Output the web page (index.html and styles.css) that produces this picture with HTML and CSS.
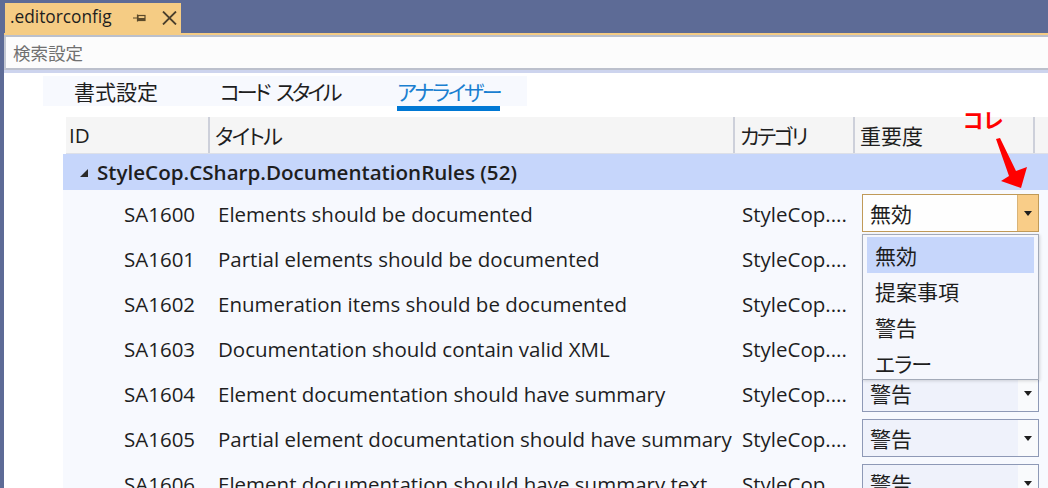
FILE: index.html
```html
<!DOCTYPE html>
<html lang="ja">
<head>
<meta charset="utf-8">
<link rel="stylesheet" href="styles.css">
</head>
<body>
<div class="titlebar">
  <div class="doctab">
    <span class="doctab-name">.editorconfig</span>
    <svg class="pin" width="13" height="8" viewBox="0 0 13 8"><path d="M0 4h4M4.5 0.5v7" stroke="#5b4a2a" stroke-width="1.2" fill="none"/><rect x="5" y="1.5" width="7" height="5" fill="none" stroke="#5b4a2a" stroke-width="1.2"/><rect x="5" y="4" width="7" height="2.5" fill="#5b4a2a"/></svg>
    <svg class="close" width="15" height="14" viewBox="0 0 15 14"><path d="M1 0.5l13 13M14 0.5l-13 13" stroke="#4a3f2c" stroke-width="1.8" fill="none"/></svg>
  </div>
</div>
<div class="main">
  <div class="accent"></div>
  <div class="search"><span class="search-ph">検索設定</span></div>
  <div class="content">
    <div class="tabs">
      <div class="tab t1">書式設定</div>
      <div class="tab t2 kana">コード スタイル</div>
      <div class="tab t3 kana active">アナライザー</div>
    </div>
    <div class="table">
      <div class="thead">
        <div class="th first">ID</div>
        <div class="th kana-s">タイトル</div>
        <div class="th kana">カテゴリ</div>
        <div class="th">重要度</div>
        <div class="th"></div>
      </div>
      <div class="group"><span class="tri"></span>StyleCop.CSharp.DocumentationRules (52)</div>
      <div class="row">
        <div class="c-id">SA1600</div><div class="c-title">Elements should be documented</div><div class="c-cat">StyleCop....</div>
        <div class="c-sev"><div class="select open"><span class="sel-val">無効</span><span class="sel-btn"><i class="arrow"></i></span></div></div>
      </div>
      <div class="row">
        <div class="c-id">SA1601</div><div class="c-title">Partial elements should be documented</div><div class="c-cat">StyleCop....</div>
        <div class="c-sev"></div>
      </div>
      <div class="row">
        <div class="c-id">SA1602</div><div class="c-title">Enumeration items should be documented</div><div class="c-cat">StyleCop....</div>
        <div class="c-sev"></div>
      </div>
      <div class="row">
        <div class="c-id">SA1603</div><div class="c-title">Documentation should contain valid XML</div><div class="c-cat">StyleCop....</div>
        <div class="c-sev"></div>
      </div>
      <div class="row">
        <div class="c-id">SA1604</div><div class="c-title">Element documentation should have summary</div><div class="c-cat">StyleCop....</div>
        <div class="c-sev"><div class="select"><span class="sel-val">警告</span><span class="sel-btn"><i class="arrow"></i></span></div></div>
      </div>
      <div class="row">
        <div class="c-id">SA1605</div><div class="c-title">Partial element documentation should have summary</div><div class="c-cat">StyleCop....</div>
        <div class="c-sev"><div class="select"><span class="sel-val">警告</span><span class="sel-btn"><i class="arrow"></i></span></div></div>
      </div>
      <div class="row">
        <div class="c-id">SA1606</div><div class="c-title">Element documentation should have summary text</div><div class="c-cat">StyleCop....</div>
        <div class="c-sev"><div class="select"><span class="sel-val">警告</span><span class="sel-btn"><i class="arrow"></i></span></div></div>
      </div>
    </div>
  </div>
</div>

<div class="popup">
  <div class="opt sel">無効</div>
  <div class="opt">提案事項</div>
  <div class="opt">警告</div>
  <div class="opt kana-l">エラー</div>
</div>

<div class="note">コレ</div>
<svg class="note-arrow" width="1048" height="488" viewBox="0 0 1048 488"><polygon points="996,139 1000,138 1016,171 1027,167 1021,188 1001,181 1009,176" fill="#ff0000"/></svg>
</body>
</html>
```
FILE: styles.css
```css
html, body {
  margin: 0;
  padding: 0;
}
body {
  width: 1048px;
  height: 488px;
  overflow: hidden;
  background: #ffffff;
  font-family: "Open Sans", "Noto Sans CJK JP", sans-serif;
  color: #1e1e1e;
  position: relative;
}
.titlebar {
  height: 33px;
  background: #5d6b96;
  display: flex;
  align-items: flex-end;
}
.doctab {
  margin-left: 5px;
  width: 176px;
  height: 30px;
  background: #f5cc84;
  display: flex;
  align-items: center;
  box-sizing: border-box;
  padding-left: 5px;
}
.doctab-name {
  font-size: 17.3px;
  color: #1e1e1e;
  width: 118px;
  line-height: 1;
  margin-top: -2px;
}
.pin {
  margin-left: 5px;
}
.close {
  margin-left: 16px;
}
.main {
  border-left: 4px solid #5d6b96;
  height: 455px;
}
.accent {
  height: 2px;
  background: #f5cc84;
  border-bottom: 2px solid #bbc0cc;
}
.search {
  height: 31px;
  background: #fcfcfc;
  border-left: 2px solid #c4c8d2;
  border-bottom: 2px solid #bcc0cc;
  box-shadow: 0 3px 0 #cdd4ee;
  display: flex;
  align-items: center;
  padding-left: 7px;
}
.search-ph {
  font-family: "Noto Sans CJK JP", sans-serif;
  font-size: 17.5px;
  color: #707070;
}
.content {
  padding-top: 6px;
}
.tabs {
  margin-left: 39px;
  width: 484px;
  height: 30px;
  background: #f7f9fe;
  display: flex;
  box-sizing: border-box;
  white-space: nowrap;
}
.tab {
  flex-shrink: 0;
  height: 30px;
  display: flex;
  align-items: center;
  font-family: "Noto Sans CJK JP", sans-serif;
  font-feature-settings: "palt";
  font-size: 21px;
  color: #1e1e1e;
}
.t1 {
  margin-left: 31px;
}
.t2 {
  margin-left: 62px;
  word-spacing: 6px;
}
.t2.kana {
  letter-spacing: -3px;
}
.t3 {
  margin-left: 58px;
}
.kana {
  letter-spacing: -2.3px;
}
.kana-s {
  letter-spacing: -1.6px;
}
.kana-l {
  letter-spacing: -1px;
}
.tab.active {
  color: #1a7fd0;
  box-shadow: 0 5px 0 #0078d4;
}
.table {
  margin-top: 11px;
  margin-left: 59px;
}
.thead {
  margin-left: 3px;
  height: 36px;
  background: #f5f5f5;
  border-bottom: 1px solid #dde0e8;
  display: grid;
  grid-template-columns: 142px 525px 120px 180px 1fr;
}
.th {
  border-left: 2px solid #cdd0da;
  display: flex;
  align-items: center;
  padding-left: 5px;
  font-family: "Noto Sans CJK JP", sans-serif;
  font-feature-settings: "palt";
  font-size: 21px;
  color: #1e1e1e;
}
.th.first {
  border-left: none;
  padding-left: 3px;
  font-family: "Open Sans", sans-serif;
  font-size: 20.6px;
}
.group {
  height: 36px;
  background: #c6d6fb;
  display: flex;
  align-items: center;
  font-size: 20.6px;
  font-weight: 600;
  color: #1e1e1e;
  padding-left: 17px;
}
.tri {
  width: 0;
  height: 0;
  border-left: 8px solid transparent;
  border-bottom: 8px solid #2a2a2a;
  margin-right: 9px;
  margin-top: 2px;
}
.row {
  height: 45px;
  background: #f7f9fe;
  display: grid;
  grid-template-columns: 148px 525px 120px 180px 1fr;
  align-items: center;
  font-size: 20.5px;
  color: #1e1e1e;
  white-space: nowrap;
}
.row > div {
  padding-top: 2px;
}
.c-id {
  padding-left: 61px;
}
.c-title {
  padding-left: 7px;
}
.c-cat {
  padding-left: 6px;
}
.row > .c-sev {
  padding-left: 6px;
  padding-top: 0;
}
.select {
  width: 177px;
  height: 38px;
  box-sizing: border-box;
  border: 1px solid #8e99b6;
  background: #eff2fb;
  display: flex;
  margin-top: 1px;
}
.sel-val {
  flex: 1;
  display: flex;
  align-items: center;
  padding-left: 7px;
  font-family: "Noto Sans CJK JP", sans-serif;
  font-size: 21px;
}
.sel-btn {
  width: 20px;
  display: flex;
  align-items: center;
  justify-content: center;
  background: #f9fafc;
}
.arrow {
  width: 0;
  height: 0;
  border-left: 4.5px solid transparent;
  border-right: 4.5px solid transparent;
  border-top: 5px solid #1e1e1e;
}
.select.open {
  border-color: #c09a58;
  background: #fefefe;
}
.select.open .sel-btn {
  background: #f9cd88;
  border-left: 1px solid #d9b478;
}
.popup {
  position: absolute;
  left: 862px;
  top: 234px;
  width: 177px;
  height: 146px;
  box-sizing: border-box;
  border: 1px solid #a3aab8;
  background: #f5f7fd;
  box-shadow: 1px 1px 3px rgba(0,0,0,0.15);
  padding: 2px 4px;
}
.opt {
  height: 36px;
  display: flex;
  align-items: center;
  padding-left: 8px;
  font-family: "Noto Sans CJK JP", sans-serif;
  font-feature-settings: "palt";
  font-size: 21px;
  color: #1e1e1e;
}
.opt.sel {
  background: #c6d6fb;
}
.note {
  position: absolute;
  left: 963px;
  top: 104px;
  font-family: "Noto Sans CJK JP", sans-serif;
  font-feature-settings: "palt";
  font-weight: 700;
  font-size: 21px;
  line-height: 30px;
  color: #ff0000;
}
.note-arrow {
  position: absolute;
  left: 0;
  top: 0;
  pointer-events: none;
}
```
